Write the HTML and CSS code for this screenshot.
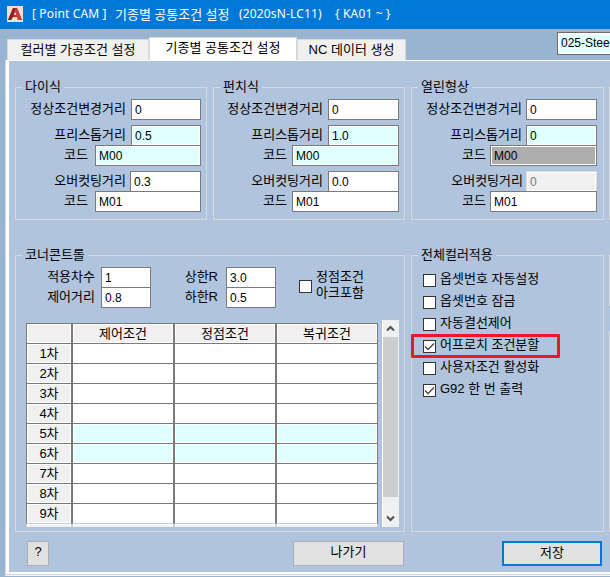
FILE: index.html
```
<!DOCTYPE html>
<html lang="ko">
<head>
<meta charset="utf-8">
<title>Point CAM</title>
<link rel="stylesheet" href="styles.css">
</head>
<body>
<div class="window">
  <header class="titlebar">
    <svg class="logo" width="16" height="16" viewBox="0 0 16 16">
      <rect width="16" height="16" fill="#f0dedb"/>
      <path d="M1 14 6 2h4l5 12h-4l-1-3H6l-2 3z" fill="#bd2f32"/>
      <path d="M6 2h2l-1 7-3 5H1z" fill="#8d2026"/>
      <path d="M10 2l5 12h-4l-1-3-2-6z" fill="#cf3a3b"/>
      <path d="M7 9 8 5.5 9.3 9z" fill="#f7e9e7"/>
    </svg>
    <span class="t-app">[ Point CAM ]</span>
    <span class="t-name">기종별 공통조건 설정</span>
    <span class="t-model">(2020sN-LC11)</span>
    <span class="t-code">{ KA01 ~ }</span>
  </header>
  <nav class="tabs">
    <div class="tab tab-color">컬러별 가공조건 설정</div>
    <div class="tab tab-model active">기종별 공통조건 설정</div>
    <div class="tab tab-nc">NC 데이터 생성</div>
    <div class="combo"><span>025-Stee</span></div>
  </nav>
  <main class="pane">
    <div class="row row-top">
      <section class="group die">
        <h2>다이식</h2>
        <div class="field first"><label>정상조건변경거리</label><span class="input">0</span></div>
        <div class="field stop"><label>프리스톱거리</label><span class="input cyan">0.5</span></div>
        <div class="field code"><label>코드</label><span class="input cyan">M00</span></div>
        <div class="field over"><label>오버컷팅거리</label><span class="input">0.3</span></div>
        <div class="field code"><label>코드</label><span class="input">M01</span></div>
      </section>
      <section class="group punch">
        <h2>펀치식</h2>
        <div class="field first"><label>정상조건변경거리</label><span class="input">0</span></div>
        <div class="field stop"><label>프리스톱거리</label><span class="input cyan">1.0</span></div>
        <div class="field code"><label>코드</label><span class="input cyan">M00</span></div>
        <div class="field over"><label>오버컷팅거리</label><span class="input">0.0</span></div>
        <div class="field code"><label>코드</label><span class="input">M01</span></div>
      </section>
      <section class="group open">
        <h2>열린형상</h2>
        <div class="field first"><label>정상조건변경거리</label><span class="input">0</span></div>
        <div class="field stop"><label>프리스톱거리</label><span class="input cyan">0</span></div>
        <div class="field code"><label>코드</label><span class="input gray">M00</span></div>
        <div class="field over"><label>오버컷팅거리</label><span class="input disabled">0</span></div>
        <div class="field code"><label>코드</label><span class="input">M01</span></div>
      </section>
      <div class="edge"></div>
    </div>
    <div class="row row-mid">
      <section class="group corner">
        <h2>코너콘트롤</h2>
        <div class="settings">
          <div class="pair count">
            <div class="field"><label>적용차수</label><span class="input">1</span></div>
            <div class="field"><label>제어거리</label><span class="input">0.8</span></div>
          </div>
          <div class="pair limit">
            <div class="field"><label>상한R</label><span class="input">3.0</span></div>
            <div class="field"><label>하한R</label><span class="input">0.5</span></div>
          </div>
          <div class="arc"><span class="box"></span><span>정점조건<br>아크포함</span></div>
        </div>
        <div class="grid-area">
          <div class="grid">
            <div class="line head"><b></b><i>제어조건</i><i>정점조건</i><i>복귀조건</i></div>
            <div class="line"><b>1차</b><i></i><i></i><i></i></div>
            <div class="line"><b>2차</b><i></i><i></i><i></i></div>
            <div class="line"><b>3차</b><i></i><i></i><i></i></div>
            <div class="line"><b>4차</b><i></i><i></i><i></i></div>
            <div class="line on"><b>5차</b><i></i><i></i><i></i></div>
            <div class="line on"><b>6차</b><i></i><i></i><i></i></div>
            <div class="line"><b>7차</b><i></i><i></i><i></i></div>
            <div class="line"><b>8차</b><i></i><i></i><i></i></div>
            <div class="line"><b>9차</b><i></i><i></i><i></i></div>
            <div class="line cut"><b></b><i></i><i></i><i></i></div>
          </div>
          <div class="scroll">
            <svg width="15" height="17" viewBox="0 0 15 17"><path d="M4 10.5 7.5 7l3.5 3.5" fill="none" stroke="#505050" stroke-width="2"/></svg>
            <div class="thumb"></div>
            <svg width="15" height="30" viewBox="0 0 15 30"><path d="M4 19.5 7.5 23l3.5-3.5" fill="none" stroke="#505050" stroke-width="2"/></svg>
          </div>
        </div>
      </section>
      <section class="group all">
        <h2>전체컬러적용</h2>
        <div class="check"><span class="box"></span>옵셋번호 자동설정</div>
        <div class="check"><span class="box"></span>옵셋번호 잠금</div>
        <div class="check"><span class="box"></span>자동결선제어</div>
        <div class="check marked"><span class="box"><svg width="11" height="11" viewBox="0 0 11 11"><path d="M1 5.5 4 8.5 10 2.5" fill="none" stroke="#444" stroke-width="1.3"/></svg></span>어프로치 조건분할</div>
        <div class="check"><span class="box"></span>사용자조건 활성화</div>
        <div class="check g92"><span class="box"><svg width="11" height="11" viewBox="0 0 11 11"><path d="M1 5.5 4 8.5 10 2.5" fill="none" stroke="#444" stroke-width="1.3"/></svg></span>G92 한 번 출력</div>
      </section>
      <div class="edges"><div></div><div></div></div>
    </div>
    <footer class="actions">
      <button class="help">?</button>
      <button class="exit">나가기</button>
      <button class="save">저장</button>
    </footer>
  </main>
</div>
</body>
</html>
```

FILE: styles.css
```
*, *::after { box-sizing: border-box; }
html, body { margin: 0; overflow: hidden; }
body {
  width: 610px;
  height: 577px;
  font: 13px/20px "Liberation Sans", "Noto Sans CJK KR", sans-serif;
  color: #000;
}
.window { width: 610px; height: 577px; background: #99b4d1; overflow: hidden; }

.titlebar {
  display: flex;
  align-items: center;
  height: 29px;
  padding: 0 0 2px 7px;
  background: #0078d7;
  color: #fff;
  font-family: "Noto Sans", "Noto Sans CJK KR", sans-serif;
  font-size: 12px;
  letter-spacing: .15px;
  white-space: pre;
}
.titlebar span { flex: none; }
.logo { margin-top: 1px; }
.t-app { width: 84px; margin-left: 9px; }
.t-name { width: 124px; margin-left: -1px; font-size: 13px; letter-spacing: 0; }
.t-model { width: 96px; }
.t-code { width: 70px; }

.tabs { display: flex; height: 31px; padding-left: 7px; align-items: flex-end; }
.tab {
  height: 21px;
  line-height: 19px;
  background: #f0f0f0;
  border: 1px solid #d9d9d9;
  border-bottom: 0;
  text-align: center;
  white-space: nowrap;
}
.tab-color { width: 142px; }
.tab-model { width: 148px; }
.tab-nc { width: 109px; }
.tab.active { height: 23px; line-height: 19px; background: #fff; }
.combo {
  flex: none;
  width: 53px;
  height: 23px;
  margin: 0 0 5px auto;
  padding: 2px 0 2px 2px;
  background: #fff;
  border: 1px solid #6e6e6e;
  border-right: 0;
  font-size: 12px;
  line-height: 16px;
  white-space: nowrap;
}
.combo span { display: block; height: 17px; padding-left: 1px; background: #e0ffff; }

.pane {
  height: 514px;
  margin-left: 5px;
  padding: 26px 0 0 6px;
  background: #b0c4de;
  border-left: 1px solid #d9d9d9;
  border-top: 1px solid #fff;
  border-bottom: 2px solid #fff;
  box-shadow: inset 3px 0 #fff, 0 1px #d0d4da, 0 2px #f4f4f4;
}
.row { display: flex; padding-left: 3px; }
.group { position: relative; flex: none; border: 1px solid #d6dade; }
.group h2 {
  position: absolute;
  top: -11px;
  left: 6px;
  margin: 0;
  padding: 0 3px;
  background: #b0c4de;
  font: inherit;
  white-space: nowrap;
}
.row-top .group { width: 192px; height: 133px; padding: 11px 5px 0 0; }
.row-top .punch { margin-left: 6px; }
.row-top .open { margin-left: 6px; width: 193px; padding-right: 6px; }
.edge { width: 1px; height: 133px; margin-left: 5px; background: #d6dade; }

.field { display: flex; justify-content: flex-end; height: 21px; white-space: nowrap; }
.field label { margin-right: 5px; line-height: 19px; }
.input {
  flex: none;
  width: 71px;
  height: 21px;
  padding-left: 3px;
  background: #fff;
  border: 1px solid #7a7a7a;
  box-shadow: inset 0 0 0 1px #fff;
  font-size: 12px;
  line-height: 20px;
}
.cyan { background: #e0ffff; }
.gray { background: #adadad; }
.disabled { background: #f0f0f0; border-color: #dcdcdc; color: #777; }
.row-top .first label { line-height: 20px; }
.row-top .stop { margin-top: 5px; }
.row-top .code { margin-top: -1px; }
.row-top .over { margin-top: 5px; }
.row-top .code .input { width: 107px; }
.row-top .code label { margin-right: 7px; }
.die .input { width: 70px; }
.die .over .input { width: 71px; }
.die .code .input { width: 106px; }
.die .over label { margin-right: 4px; }
.punch .field label { margin-right: 5px; }
.open .field label { margin-right: 4px; }
.open .over label { margin-right: 3px; }

.row-mid { margin-top: 35px; }
.row-mid .group { height: 277px; }
.row-mid .corner { width: 390px; padding: 11px 0 0 10px; }
.row-mid .all { width: 193px; margin-left: 6px; padding: 12px 0 0 11px; }
.edges { display: flex; flex-direction: column; justify-content: space-between; width: 1px; margin-left: 5px; }
.edges div { height: 51px; background: #d6dade; }
.edges div + div { height: 201px; }

.settings { display: flex; height: 53px; }
.pair .input { width: 50px; }
.pair .field label { line-height: 20px; }
.pair .field + .field { margin-top: -1px; }
.count { width: 125px; }
.limit { width: 125px; }
.count label { margin-right: 6px; }
.limit label { margin-right: 8px; }
.arc { display: flex; align-items: flex-start; margin-left: 23px; line-height: 16px; white-space: nowrap; }
.arc .box { margin: 13px 4px 0 0; }
.arc span + span { margin-top: 2px; }
.box {
  display: block;
  flex: none;
  width: 13px;
  height: 13px;
  background: #fff;
  border: 1px solid #333;
}
.box svg { display: block; }

.grid-area { display: flex; align-items: flex-end; height: 207px; }
.grid { width: 352px; height: 204px; overflow: hidden; border-top: 1px solid #7a7a7a; }
.line { display: flex; height: 20px; }
.line b, .line i {
  flex: none;
  height: 20px;
  border: 1px solid #7a7a7a;
  border-top: 0;
  background: #fff;
  box-shadow: inset 0 0 0 1px #fff;
  font: inherit;
  line-height: 20px;
  text-align: center;
}
.line b { width: 46px; background: #f0f0f0; }
.line i { width: 102px; }
.head i, .head b { background: #f0f0f0; }
.on i { background: #e0ffff; }
.cut b, .cut i { background: #f0f0f0; border-color: #ccc; }
.line:nth-child(10) b, .line:nth-child(10) i { border-bottom-color: #ccc; }
.scroll { width: 17px; height: 207px; margin-left: 4px; padding-right: 1px; border-left: 1px solid #fff; background: #f0f0f0; }
.scroll svg { display: block; }
.thumb { width: 15px; height: 160px; background: #cdcdcd; }

.check { display: flex; align-items: center; height: 22px; white-space: nowrap; line-height: 18px; }
.check .box { margin: 3px 4px 0 0; }
.marked { position: relative; }
.marked::after {
  content: "";
  position: absolute;
  left: -12px;
  top: 0;
  width: 149px;
  height: 24px;
  border: 3px solid #f01820;
  border-radius: 1px;
}
.actions { display: flex; padding: 9px 0 0 15px; }
.actions button {
  height: 25px;
  padding: 0 0 3px;
  border: 1px solid #adadad;
  background: #e1e1e1;
  color: #000;
  font: inherit;
}
.help { width: 22px; }
.actions .exit { width: 111px; margin-left: 244px; }
.actions .save { width: 100px; margin-left: 98px; border: 2px solid #0078d7; }
```
